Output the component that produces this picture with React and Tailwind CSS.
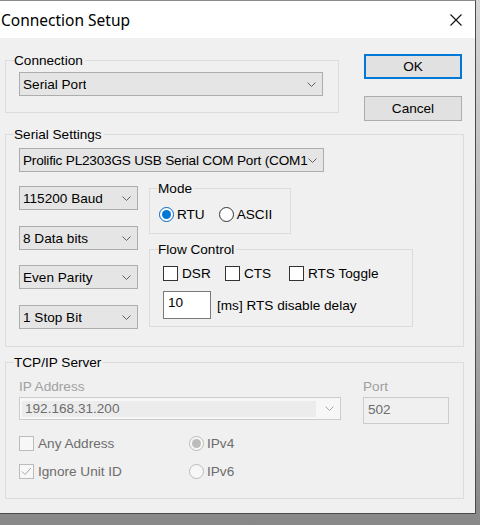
import React from 'react';

function Chevron({ color = '#606060' }) {
  return (
    <svg width="9" height="5" viewBox="0 0 9 5" className="shrink-0">
      <polyline points="0.5,0.5 4.5,4.5 8.5,0.5" fill="none" stroke={color} strokeWidth="1" />
    </svg>
  );
}

function Combo({ className, textClass = '', children }) {
  return (
    <div className={`flex items-center justify-between border border-[#adadad] bg-[#e5e5e5] pl-[3px] pr-[6px] h-[24px] ${className}`}>
      <span className={`whitespace-nowrap overflow-hidden min-w-0 ${textClass}`}>{children}</span>
      <Chevron />
    </div>
  );
}

function Group({ label, className, children }) {
  return (
    <fieldset className={`border border-[#dcdcdc] ${className}`}>
      <legend className="ml-[8px] px-0 leading-[15px] pr-[2px]">{label}</legend>
      {children}
    </fieldset>
  );
}

function Radio({ checked, disabled, label }) {
  return (
    <div className="flex items-center gap-[3px]">
      <span
        className={`w-[15px] h-[15px] rounded-full border flex items-center justify-center ${
          disabled ? 'border-[#bcbcbc] bg-[#f7f7f7]' : checked ? 'border-[#0064c8] bg-white' : 'border-[#333] bg-white'
        }`}
      >
        {checked && <span className={`w-[9px] h-[9px] rounded-full ${disabled ? 'bg-[#bcbcbc]' : 'bg-[#0078d7]'}`} />}
      </span>
      <span className={disabled ? 'text-[#6d6d6d]' : ''}>{label}</span>
    </div>
  );
}

function Check({ checked, disabled, label }) {
  return (
    <div className="flex items-center gap-[4px]">
      <span
        className={`w-[15px] h-[15px] border flex items-center justify-center ${
          disabled ? 'border-[#bcbcbc] bg-[#f7f7f7]' : 'border-[#333] bg-white'
        }`}
      >
        {checked && (
          <svg width="11" height="9" viewBox="0 0 11 9">
            <polyline points="1,4.5 4,7.5 10,1" fill="none" stroke="#a8a8a8" strokeWidth="1" />
          </svg>
        )}
      </span>
      <span className={`whitespace-nowrap ${disabled ? 'text-[#6d6d6d]' : ''}`}>{label}</span>
    </div>
  );
}

export default function App() {
  return (
    <div className="w-[480px] h-[525px] overflow-hidden bg-gradient-to-b from-[#d6d6d6] via-[#b4b4b4] to-[#888888] font-['Liberation_Sans',Arial,sans-serif] text-[13.6px] leading-[15px] text-black">
      <div className="w-[476px] h-[514px] bg-[#f0f0f0] border-t border-t-[#8a8a8a] border-r border-b border-r-[#4a4a4a] border-b-[#4a4a4a] flex flex-col overflow-hidden">
        {/* title bar */}
        <div className="shrink-0 h-[37px] bg-white flex items-center justify-between pr-[13px]">
          <span className="font-['Noto_Sans',sans-serif] text-[15.5px] leading-[20px] pl-[1px] pt-[1px]">Connection Setup</span>
          <svg width="12" height="12" viewBox="0 0 12 12">
            <path d="M0.5 0.5 L11.5 11.5 M11.5 0.5 L0.5 11.5" stroke="#111" strokeWidth="1.1" />
          </svg>
        </div>

        <div className="shrink-0 pl-[5px] pt-[15px]">
          {/* connection row */}
          <div className="flex items-start">
            <Group label="Connection" className="w-[334px]">
              <div className="pl-[13px] pt-[4px] pb-[16px]">
                <Combo className="w-[304px]">Serial Port</Combo>
              </div>
            </Group>
            <div className="ml-[25px] mt-[1px] flex flex-col">
              <button className="w-[98px] h-[25px] border-2 border-[#0078d7] bg-[#e1e1e1] leading-none">OK</button>
              <button className="mt-[17px] w-[98px] h-[25px] border border-[#adadad] bg-[#e1e1e1] leading-none">Cancel</button>
            </div>
          </div>

          {/* serial settings */}
          <Group label="Serial Settings" className="w-[459px] mt-[6px]">
            <div className="pl-[13px] pt-[6px] pb-[17px]">
              <Combo className="w-[305px]" textClass="tracking-[-0.2px]">Prolific PL2303GS USB Serial COM Port (COM1</Combo>
              <div className="flex items-start">
                <div className="flex flex-col mt-[14px]">
                  <Combo className="w-[119px]">115200 Baud</Combo>
                  <Combo className="w-[119px] mt-[16px]">8 Data bits</Combo>
                  <Combo className="w-[119px] mt-[15px]">Even Parity</Combo>
                  <Combo className="w-[119px] mt-[16px]">1 Stop Bit</Combo>
                </div>
                <div className="ml-[11px] mt-[9px] flex flex-col">
                  <Group label="Mode" className="w-[142px]">
                    <div className="pl-[9px] pt-[11px] pb-[11px] flex items-center gap-[14px]">
                      <Radio checked label="RTU" />
                      <Radio label="ASCII" />
                    </div>
                  </Group>
                  <Group label="Flow Control" className="w-[264px] mt-[8px]">
                    <div className="pl-[13px] pt-[9px] pb-[7px]">
                      <div className="flex items-center">
                        <div className="w-[62px]"><Check label="DSR" /></div>
                        <div className="w-[64px]"><Check label="CTS" /></div>
                        <Check label="RTS Toggle" />
                      </div>
                      <div className="flex items-center mt-[10px]">
                        <div className="w-[48px] h-[28px] border border-[#7a7a7a] bg-white pl-[4px] pt-[3px] leading-[15px]">10</div>
                        <span className="ml-[6px]">[ms] RTS disable delay</span>
                      </div>
                    </div>
                  </Group>
                </div>
              </div>
            </div>
          </Group>

          {/* tcp/ip server */}
          <Group label="TCP/IP Server" className="w-[459px] mt-[8px]">
            <div className="pl-[13px] pt-[9px] pb-[19px]">
              <div className="flex items-start">
                <div className="flex flex-col">
                  <span className="leading-[15px] text-[#a0a0a0]">IP Address</span>
                  <div className="mt-[3px] w-[322px] h-[23px] border border-[#cccccc] bg-[#f7f7f7] flex items-center pl-[2px] pr-[6px]">
                    <div className="w-[294px] h-[16px] bg-[#ececec] flex items-center pl-[3px] text-[#6d6d6d]">192.168.31.200</div>
                    <div className="flex-1 flex justify-end"><Chevron color="#a8a8a8" /></div>
                  </div>
                </div>
                <div className="ml-[22px] flex flex-col">
                  <span className="leading-[15px] text-[#a0a0a0]">Port</span>
                  <div className="mt-[3px] w-[86px] h-[27px] border border-[#cccccc] bg-[#f0f0f0] pl-[4px] pt-[4px] leading-[15px] text-[#6d6d6d]">502</div>
                </div>
              </div>
              <div className="grid grid-cols-[170px_1fr] gap-y-[13px] mt-[12px]">
                <Check disabled label="Any Address" />
                <Radio disabled checked label="IPv4" />
                <Check disabled checked label="Ignore Unit ID" />
                <Radio disabled label="IPv6" />
              </div>
            </div>
          </Group>
        </div>
      </div>
    </div>
  );
}
